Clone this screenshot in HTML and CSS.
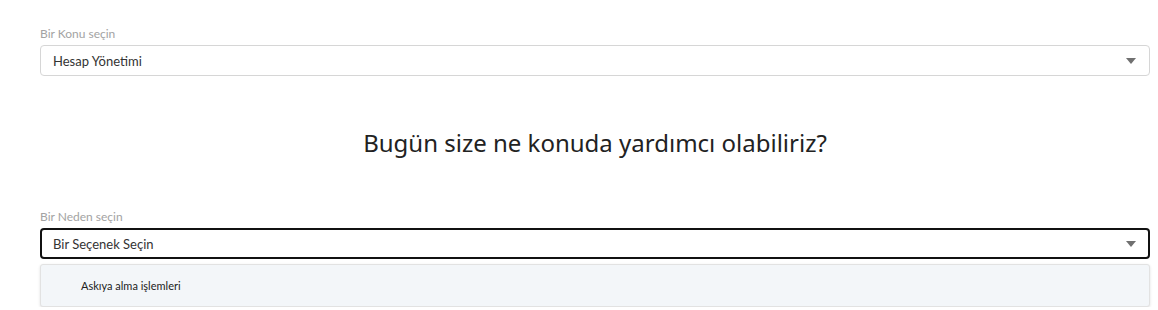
FILE: index.html
```html
<!DOCTYPE html>
<html lang="tr">
<head>
<meta charset="utf-8">
<link rel="stylesheet" href="styles.css">
</head>
<body>
<main class="page">
  <div class="field">
    <label class="label">Bir Konu seçin</label>
    <div class="select">
      <span class="select-value">Hesap Yönetimi</span>
      <span class="caret"></span>
    </div>
  </div>
  <h1 class="title">Bugün size ne konuda yardımcı olabiliriz?</h1>
  <div class="field">
    <label class="label">Bir Neden seçin</label>
    <div class="select select-open">
      <span class="select-value">Bir Seçenek Seçin</span>
      <span class="caret"></span>
    </div>
    <ul class="menu">
      <li class="menu-item">Askıya alma işlemleri</li>
    </ul>
  </div>
</main>
</body>
</html>
```
FILE: styles.css
```css
html, body {
  margin: 0;
  padding: 0;
  background: #ffffff;
}
.page {
  padding: 26px 8px 0 40px;
  font-family: Lato, "Open Sans", sans-serif;
}
.field {
  display: flex;
  flex-direction: column;
}
.label {
  font-size: 12px;
  line-height: 16px;
  color: #a3a3a3;
  margin-bottom: 3px;
}
.select {
  box-sizing: border-box;
  height: 31px;
  border: 1px solid #d6d6d6;
  border-radius: 4px;
  display: flex;
  align-items: center;
  justify-content: space-between;
  padding: 0 13px 0 12px;
  font-size: 13px;
  color: #333333;
}
.select-open {
  border: 2px solid #111111;
  padding-left: 11px;
  padding-right: 12px;
}
.caret {
  width: 0;
  height: 0;
  border-left: 5px solid transparent;
  border-right: 5px solid transparent;
  border-top: 6px solid #707070;
}
.title {
  margin: 51px 0 50px;
  text-align: center;
  font-family: "Noto Sans", "Open Sans", sans-serif;
  font-weight: 400;
  font-size: 24px;
  line-height: 32px;
  color: #222222;
}
.menu {
  list-style: none;
  margin: 5px 0 0;
  padding: 0;
  box-sizing: border-box;
  height: 43px;
  background: #f3f6f9;
  border: 1px solid #e2e2e2;
  border-radius: 3px;
  box-shadow: 0 1px 3px rgba(0,0,0,0.12);
}
.menu-item {
  padding: 0 0 0 40px;
  line-height: 41px;
  font-size: 11px;
  color: #222222;
}
```
